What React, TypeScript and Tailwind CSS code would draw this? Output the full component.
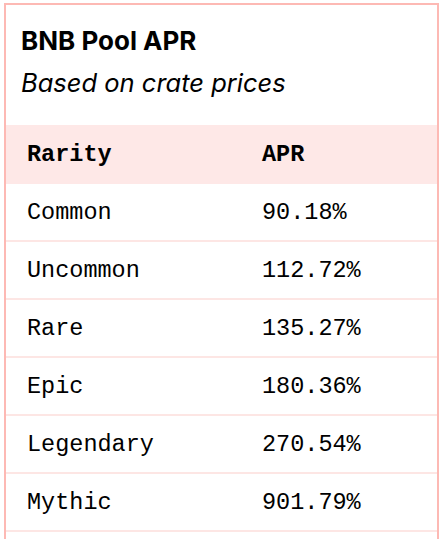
const rows = [
  { rarity: 'Common', apr: '90.18%' },
  { rarity: 'Uncommon', apr: '112.72%' },
  { rarity: 'Rare', apr: '135.27%' },
  { rarity: 'Epic', apr: '180.36%' },
  { rarity: 'Legendary', apr: '270.54%' },
  { rarity: 'Mythic', apr: '901.79%' },
]

export default function App() {
  return (
    <div className="min-h-screen bg-white px-[4px] pt-[3px] text-black">
      <div className="border-2 border-[#fdb9b4] bg-white pb-[24px]">
        <div className="px-[15px] pt-[20px] pb-[26px] font-['Inter',sans-serif]">
          <h2 className="text-[26px] leading-[32px] font-bold">BNB Pool APR</h2>
          <p className="mt-[10px] text-[25.5px] leading-[32px] italic">Based on crate prices</p>
        </div>

        <div className="font-['Liberation_Mono',monospace] text-[23.5px]">
          <div className="flex h-[59px] items-center bg-[#fee8e7] font-bold">
            <div className="w-[256px] pl-[21px]">Rarity</div>
            <div>APR</div>
          </div>
          {rows.map((row) => (
            <div key={row.rarity} className="flex h-[58px] items-center border-b-2 border-[#fde6e4] pt-[1px]">
              <div className="w-[256px] pl-[21px]">{row.rarity}</div>
              <div>{row.apr}</div>
            </div>
          ))}
        </div>
      </div>
    </div>
  )
}
